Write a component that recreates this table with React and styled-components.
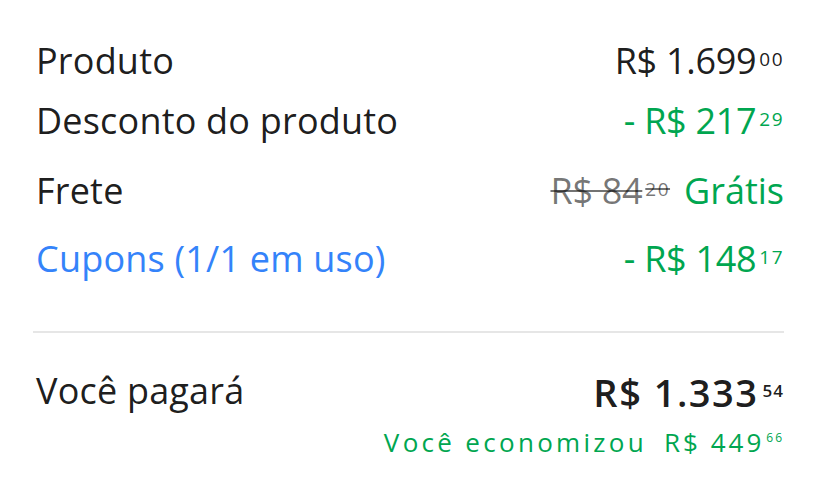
import React from "react";
import styled, { createGlobalStyle } from "styled-components";

const GlobalStyle = createGlobalStyle`
  html, body { margin: 0; padding: 0; background: #fff; }
  body { font-family: "Open Sans", "Noto Sans", sans-serif; color: rgba(0,0,0,.9); }
`;

const Summary = styled.section`
  width: 830px;
  box-sizing: border-box;
  padding: 39px 46px 0 36px;
  display: flex;
  flex-direction: column;
`;

const Row = styled.div`
  display: flex;
  justify-content: space-between;
  align-items: flex-start;
  margin-top: ${(p) => p.$space || 0}px;
  height: 44px;
`;

const Label = styled.span`
  font-size: 36px;
  line-height: 44px;
  letter-spacing: 0.2px;
  color: ${(p) => (p.$link ? "#3483fa" : "rgba(0,0,0,.9)")};
`;

const Money = styled.span`
  display: inline-flex;
  align-items: flex-start;
  color: ${(p) => p.$color || "rgba(0,0,0,.9)"};
  text-decoration: ${(p) => (p.$strike ? "line-through" : "none")};
  text-decoration-thickness: 2px;
`;

const Amount = styled.span`
  font-size: ${(p) => p.$size || 36}px;
  line-height: ${(p) => p.$lh || 44}px;
  font-weight: ${(p) => p.$weight || 400};
  letter-spacing: ${(p) => p.$ls ?? -0.3}px;
  white-space: pre;
`;

const Cents = styled.span`
  font-size: ${(p) => p.$size || 19}px;
  line-height: ${(p) => p.$size || 19}px;
  font-weight: ${(p) => p.$weight || 400};
  letter-spacing: ${(p) => p.$ls ?? 1.5}px;
  margin-top: ${(p) => p.$top ?? 11}px;
  margin-left: ${(p) => p.$gap ?? 3}px;
`;

const ValueGroup = styled.span`
  display: inline-flex;
  align-items: flex-start;
  gap: 14px;
`;

const Free = styled.span`
  font-size: 36px;
  line-height: 44px;
  color: #00a650;
`;

const Divider = styled.hr`
  border: none;
  height: 2px;
  background: #e6e6e6;
  margin: 50px 0 0 -3px;
`;

const TotalRow = styled.div`
  display: flex;
  justify-content: space-between;
  align-items: flex-start;
  margin-top: 36px;
`;

const TotalColumn = styled.div`
  display: flex;
  flex-direction: column;
  align-items: flex-end;
  margin-top: 1px;
`;

const Savings = styled.div`
  display: flex;
  align-items: flex-start;
  margin-top: 13px;
  color: #00a650;
`;

const SavingsText = styled.span`
  font-size: 26px;
  line-height: 31px;
  letter-spacing: 3.3px;
  margin-right: 17px;
`;

function Price({ value, cents, color, strike }) {
  return (
    <Money $color={color} $strike={strike}>
      <Amount>{value}</Amount>
      <Cents>{cents}</Cents>
    </Money>
  );
}

export default function App() {
  const green = "#00a650";
  return (
    <>
      <GlobalStyle />
      <Summary>
        <Row>
          <Label>Produto</Label>
          <Price value="R$ 1.699" cents="00" />
        </Row>
        <Row $space={16}>
          <Label>Desconto do produto</Label>
          <Price value="- R$ 217" cents="29" color={green} />
        </Row>
        <Row $space={26}>
          <Label>Frete</Label>
          <ValueGroup>
            <Price value="R$ 84" cents="20" color="rgba(0,0,0,.55)" strike />
            <Free>Grátis</Free>
          </ValueGroup>
        </Row>
        <Row $space={24}>
          <Label $link>Cupons (1/1 em uso)</Label>
          <Price value="- R$ 148" cents="17" color={green} />
        </Row>
        <Divider />
        <TotalRow>
          <Label>Você pagará</Label>
          <TotalColumn>
            <Money>
              <Amount $size={38} $weight={600} $ls={1.5}>R$ 1.333</Amount>
              <Cents $weight={600} $size={17} $top={12} $ls={1} $gap={4}>54</Cents>
            </Money>
            <Savings>
              <SavingsText>Você economizou</SavingsText>
              <Money $color={green}>
                <Amount $size={26} $lh={31} $ls={3}>R$ 449</Amount>
                <Cents $size={12} $top={5} $ls={2} $gap={2}>66</Cents>
              </Money>
            </Savings>
          </TotalColumn>
        </TotalRow>
      </Summary>
    </>
  );
}
